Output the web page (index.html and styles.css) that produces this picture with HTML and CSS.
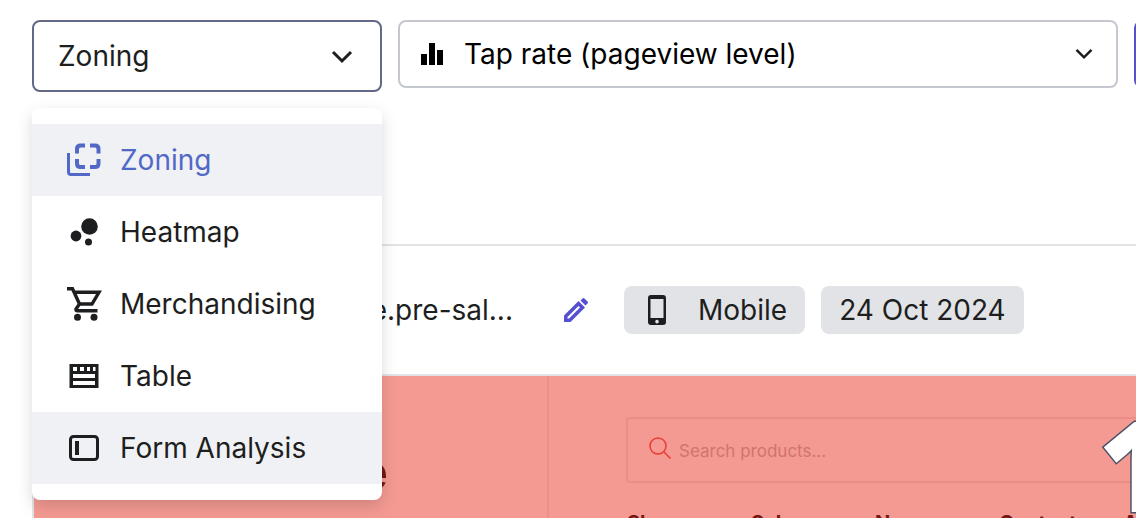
FILE: index.html
```html
<!DOCTYPE html>
<html lang="en">
<head>
    <meta charset="UTF-8">
    <meta name="viewport" content="width=device-width, initial-scale=1.0">
    <title>Zoning</title>
    <link rel="stylesheet" href="styles.css">
</head>
<body>
    <header class="toolbar">
        <div class="view-picker">
            <button type="button" class="view-button" aria-haspopup="true" aria-expanded="true" aria-controls="viewMenu">
                Zoning
                <svg class="chevron" viewBox="0 0 24 16" aria-hidden="true"><path d="M3 4l9 9 9-9"/></svg>
            </button>
            <ul class="view-menu" id="viewMenu">
                <li>
                    <button type="button" class="view-item selected">
                        <svg class="icon" viewBox="0 0 36 36" aria-hidden="true">
                            <path d="M2.500 11v19q0 2.500 2.500 2.500h19" fill="none" stroke="currentColor" stroke-width="3"/>
                            <path d="M11 11.500V7q0-3.500 3.500-3.500H19M24 3.500h5q3.500 0 3.500 3.500v4.500M32.500 17v4.500q0 3.500-3.500 3.500h-5M19 25h-4.500q-3.500 0-3.500-3.500V17" fill="none" stroke="currentColor" stroke-width="4"/>
                        </svg>
                        Zoning
                    </button>
                </li>
                <li>
                    <button type="button" class="view-item">
                        <svg class="icon" viewBox="0 0 36 36" aria-hidden="true">
                            <circle cx="23.500" cy="12.500" r="8.300"/>
                            <circle cx="10" cy="22" r="5.400"/>
                            <circle cx="22.500" cy="28" r="3.500"/>
                        </svg>
                        Heatmap
                    </button>
                </li>
                <li>
                    <button type="button" class="view-item">
                        <svg class="icon" viewBox="0 0 36 36" aria-hidden="true">
                            <path d="M1 2.700h5.500l7 15.300h12.500l7-11.700H8M13.500 18l-3.500 5q-.5 1.700 1.500 1.700h20" fill="none" stroke="currentColor" stroke-width="3.400"/>
                            <circle cx="11.500" cy="31.300" r="3.500"/>
                            <circle cx="28" cy="31.300" r="3.500"/>
                        </svg>
                        Merchandising
                    </button>
                </li>
                <li>
                    <button type="button" class="view-item">
                        <svg class="icon" viewBox="0 0 36 36" aria-hidden="true">
                            <path d="M3.500 6h29v24h-29zM7 9v4h4V9zm7 0v4h4V9zm7 0v4h3V9zm6 0v4h2.500V9zM7 16v4h22v-4zm0 7v4h22v-4z" fill-rule="evenodd"/>
                        </svg>
                        Table
                    </button>
                </li>
                <li>
                    <button type="button" class="view-item hovered">
                        <svg class="icon" viewBox="0 0 36 36" aria-hidden="true">
                            <rect x="4.500" y="6.500" width="27" height="23" rx="3" fill="none" stroke="currentColor" stroke-width="3"/>
                            <path d="M9 11h4v14H9z"/>
                        </svg>
                        Form Analysis
                    </button>
                </li>
            </ul>
        </div>
        <div class="metric">
            <svg class="metric-icon" viewBox="0 0 24 24" aria-hidden="true"><path d="M1 12h6v11H1zM9 1h6v22H9zM17 8h6v15h-6z"/></svg>
            <select class="metric-select" aria-label="Metric">
                <option>Tap rate (pageview level)</option>
            </select>
            <svg class="chevron small" viewBox="0 0 24 16" aria-hidden="true"><path d="M3 3l9 9 9-9"/></svg>
        </div>
        <button type="button" class="apply" aria-label="Apply"></button>
    </header>

    <main class="workspace">
        <div class="page-info">
            <h1 class="page-name">homepage.pre-sal...</h1>
            <button type="button" class="edit" aria-label="Edit page name">
                <svg viewBox="0 0 24 24" aria-hidden="true">
                    <path d="M0 24v-6.500L14.500 3 21 9.500 6.500 24zM3.500 20.500h1.500L16 9.500 14.500 8 3.500 19zM16.500 2.500L18.500.5q1-1 2 0l3 3q1 1 0 2l-2 2z" fill-rule="evenodd"/>
                </svg>
            </button>
            <div class="chips">
                <span class="chip">
                    <svg class="phone" viewBox="0 0 18 30" aria-hidden="true">
                        <path d="M3 0h12q3 0 3 3v24q0 3-3 3H3q-3 0-3-3V3q0-3 3-3zM2.500 4v19h13V4zM9 24.800a1.800 1.800 0 1 0 .01 0z" fill-rule="evenodd"/>
                    </svg>
                    Mobile
                </span>
                <span class="chip">24 Oct 2024</span>
            </div>
        </div>

        <section class="preview">
            <div class="preview-brand">
                <h2>Welcome</h2>
            </div>
            <div class="preview-content">
                <label class="search">
                    <svg viewBox="0 0 22 22" aria-hidden="true"><circle cx="9" cy="9" r="8"/><path d="M14.500 14.500l7 7"/></svg>
                    <input type="search" placeholder="Search products..." aria-label="Search products">
                </label>
                <nav class="preview-nav">
                    <a href="#">Shop</a>
                    <a href="#">Sale</a>
                    <a href="#">News</a>
                    <a href="#">Contact</a>
                    <a href="#">About</a>
                </nav>
            </div>
            <span class="zone-value">1</span>
        </section>
    </main>
</body>
</html>
```
FILE: styles.css
```css
* {
    box-sizing: border-box;
    margin: 0;
    padding: 0;
}

body {
    height: 100vh;
    overflow: hidden;
    font-family: Inter, "Liberation Sans", sans-serif;
    font-size: 28px;
    line-height: 36px;
    color: #1d1e20;
    background: #fff;
}

button,
input,
select {
    font: inherit;
    color: inherit;
    border: none;
    background: none;
}

button {
    cursor: pointer;
}

/* Toolbar */
.toolbar {
    display: flex;
    align-items: flex-start;
    gap: 16px;
    padding: 20px 0 0 32px;
    height: 244px;
}

.view-picker {
    position: relative;
    flex: 0 0 350px;
}

.view-button {
    display: flex;
    align-items: center;
    justify-content: space-between;
    width: 100%;
    height: 72px;
    padding: 0 26px 0 24px;
    border: 2px solid #626887;
    border-radius: 8px;
    background: #fff;
}

.chevron {
    width: 24px;
    height: 16px;
    fill: none;
    stroke: #1d1e20;
    stroke-width: 3;
}

.chevron.small {
    width: 20px;
    height: 14px;
    pointer-events: none;
}

.view-menu {
    position: absolute;
    z-index: 2;
    top: 88px;
    left: 0;
    width: 100%;
    padding: 16px 0;
    list-style: none;
    background: #fff;
    border-radius: 8px;
    box-shadow: 0 6px 16px rgba(0, 0, 0, 0.15);
}

.view-item {
    display: flex;
    align-items: center;
    gap: 18px;
    width: 100%;
    height: 72px;
    padding: 0 34px;
    text-align: left;
}

.view-item.selected {
    color: #5268c7;
    background: #f0f1f5;
}

.view-item.hovered {
    background: #f0f1f5;
}

.icon {
    width: 36px;
    height: 36px;
    fill: currentColor;
}

.metric {
    display: flex;
    flex: 1;
    align-items: center;
    height: 68px;
    padding: 0 22px 0 20px;
    color: #000;
    border: 2px solid #c5c8ce;
    border-radius: 8px;
}

.metric-icon {
    width: 24px;
    height: 24px;
}

.metric-select {
    flex: 1;
    min-width: 0;
    height: 64px;
    padding-left: 20px;
    appearance: none;
}

/* Runs past the right edge of the window */
.apply {
    flex: 0 0 160px;
    height: 68px;
    margin-right: -158px;
    background: #5550d2;
    border-radius: 8px;
}

/* Page info */
.workspace {
    margin-left: 32px;
    border-top: 2px solid #e2e3e7;
}

.page-info {
    display: flex;
    align-items: center;
    height: 128px;
}

.page-name {
    flex: 0 0 481px;
    font-size: 28px;
    font-weight: 400;
    text-align: right;
}

.edit {
    display: flex;
    margin: 0 36px 0 51px;
}

.edit svg {
    width: 24px;
    height: 24px;
    fill: #5550d2;
}

.chips {
    display: flex;
    gap: 16px;
}

.chip {
    display: flex;
    align-items: center;
    height: 48px;
    padding: 0 18px;
    background: #e2e3e7;
    border-radius: 8px;
}

.phone {
    width: 18px;
    height: 30px;
    margin: 0 32px 0 6px;
    fill: #1d1e20;
}

/* Page preview with zone overlay */
.preview {
    position: relative;
    display: flex;
    height: 480px;
    border-top: 2px solid #e2e3e7;
    border-left: 2px solid #e2e3e7;
    background: #f49a92;
    color: #751713;
}

.preview-brand {
    flex: 0 0 515px;
    padding: 70px 0 0;
    border-right: 2px solid #ed9088;
}

.preview-brand h2 {
    width: 354px;
    font-size: 52px;
    line-height: 52px;
    text-align: right;
}

.preview-content {
    flex: 1;
    min-width: 0;
    padding: 41px 0 0 77px;
}

.search {
    display: flex;
    align-items: center;
    gap: 8px;
    height: 66px;
    padding-left: 21px;
    border: 2px solid #ea8e86;
    border-right: none;
    border-radius: 4px 0 0 4px;
}

.search svg {
    width: 22px;
    height: 22px;
    margin-bottom: 4px;
    fill: none;
    stroke: #e93c32;
    stroke-width: 1.5;
}

.search input {
    flex: 1;
    min-width: 0;
    padding-top: 2px;
    font-size: 17px;
}

.search input::placeholder {
    color: #d0746d;
    opacity: 1;
}

.preview-nav {
    display: grid;
    grid-template-columns: repeat(5, 124px);
    margin-top: 24px;
    padding-left: 1px;
    font-size: 20px;
    font-weight: 700;
    line-height: 32px;
}

.preview-nav a {
    color: inherit;
    text-decoration: none;
}

.zone-value {
    position: absolute;
    top: 26px;
    right: -36px;
    font-family: "Open Sans", sans-serif;
    font-size: 125px;
    font-weight: 800;
    line-height: 124px;
    color: #fff;
    -webkit-text-stroke: 3px #4b5068;
    paint-order: stroke fill;
}
```
